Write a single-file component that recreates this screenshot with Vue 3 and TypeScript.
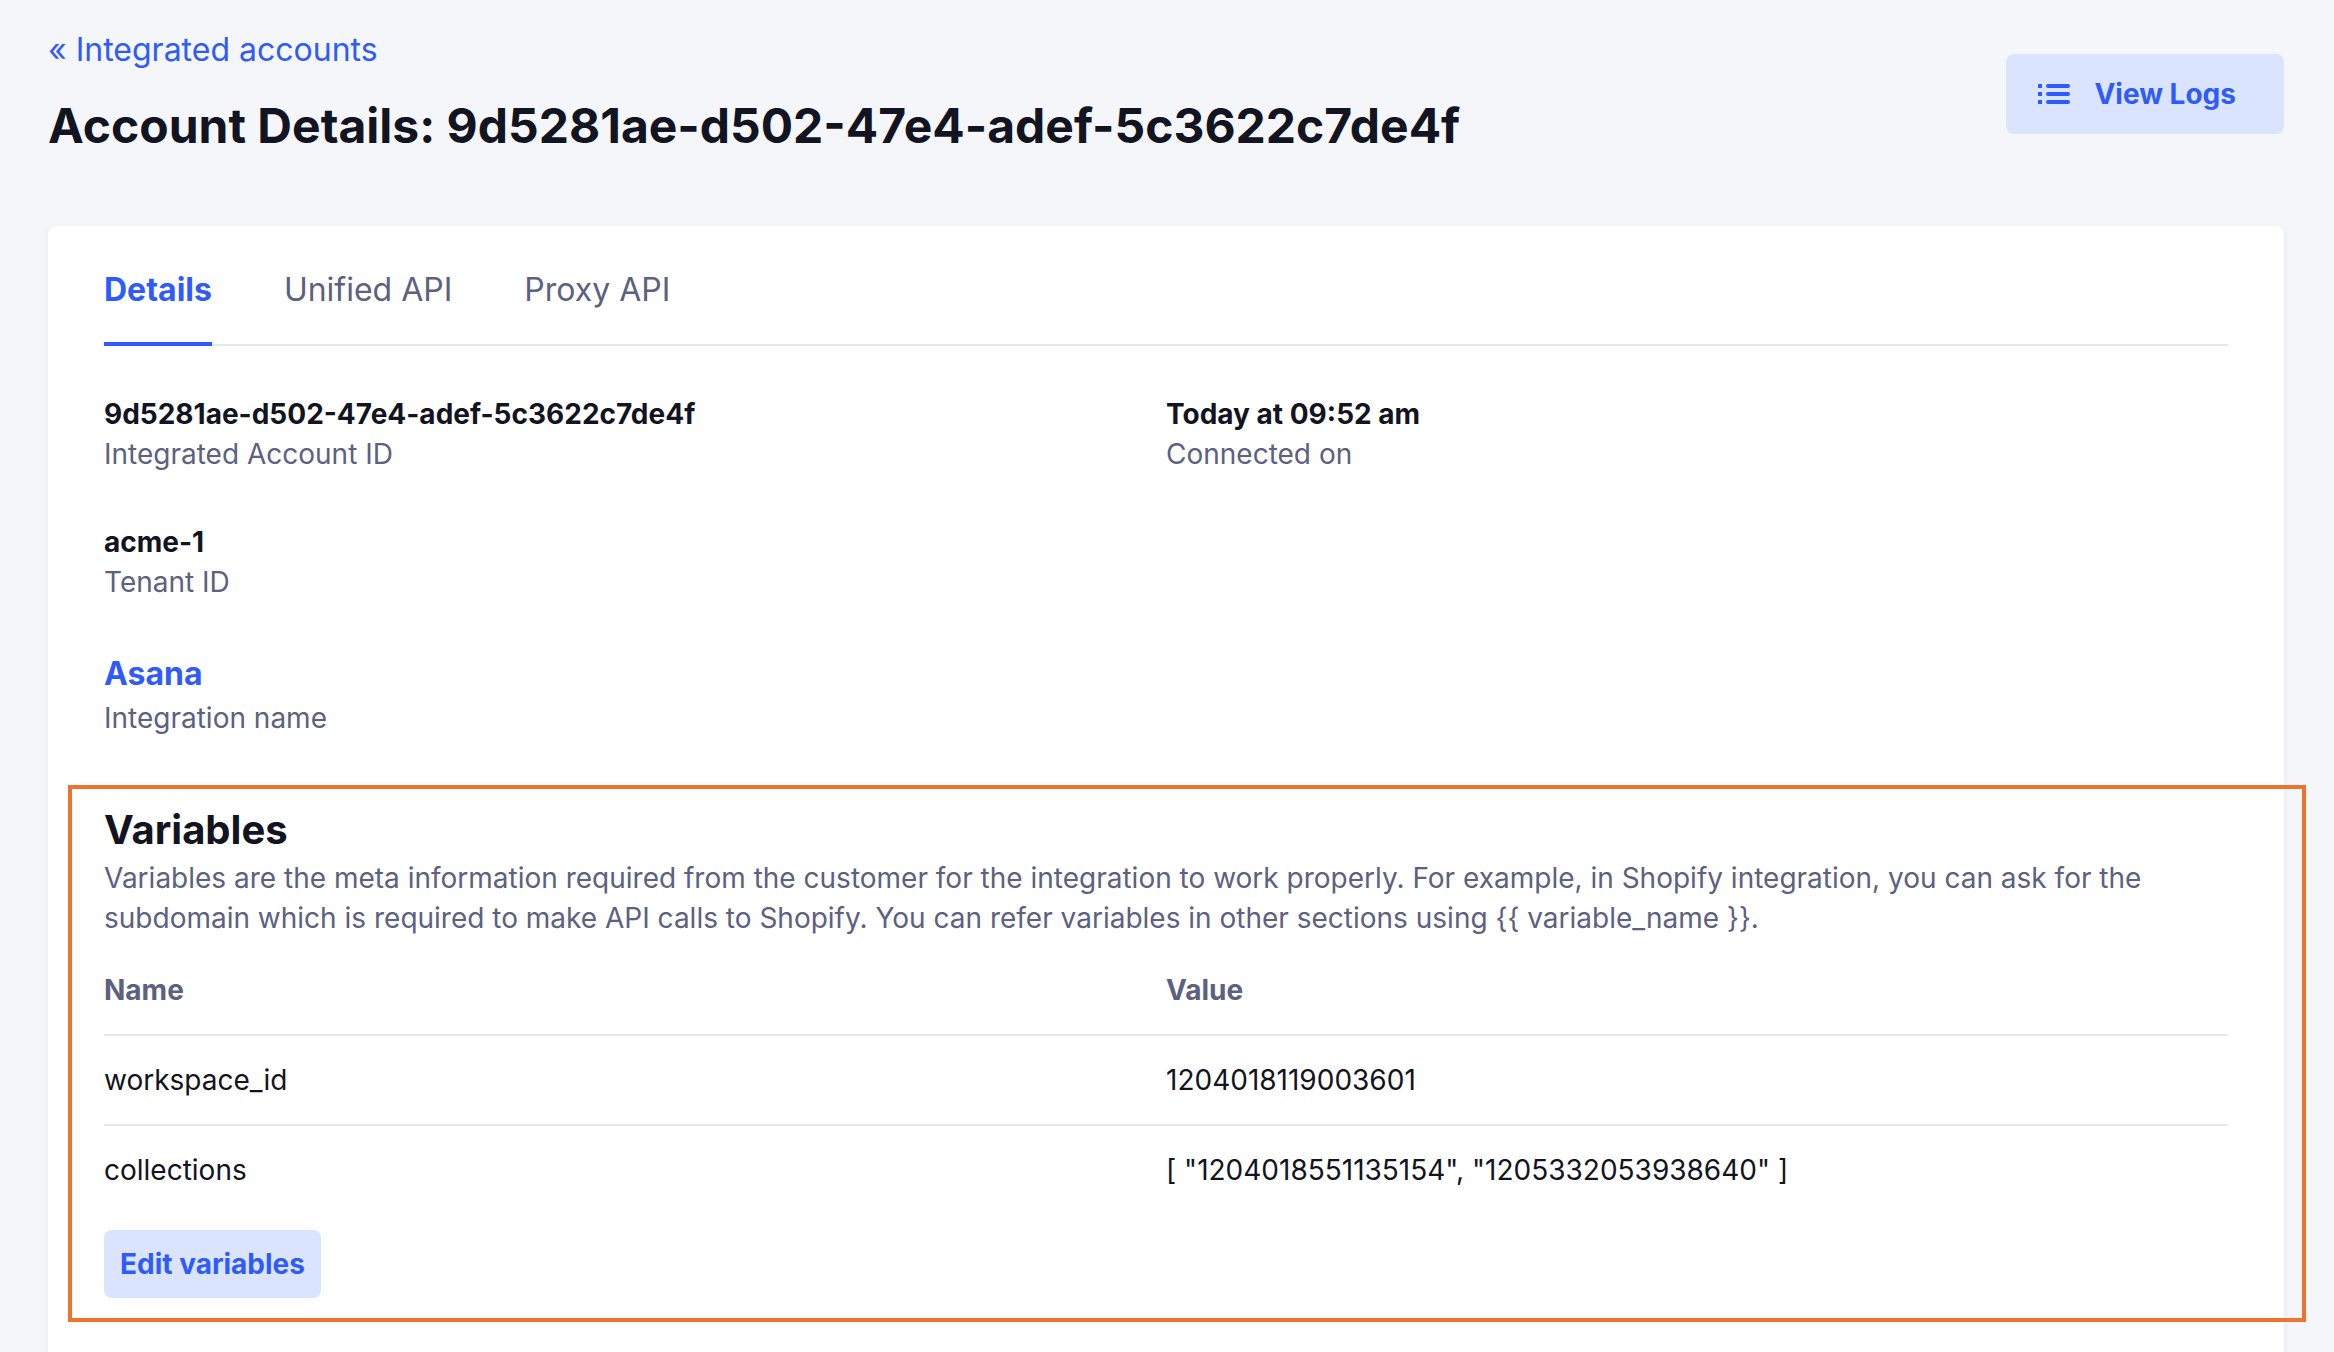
<script setup lang="ts">
interface Detail {
  value: string
  label: string
  href?: string
}

interface Variable {
  name: string
  value: string
}

const accountId = '9d5281ae-d502-47e4-adef-5c3622c7de4f'

const tabs: { label: string; active: boolean }[] = [
  { label: 'Details', active: true },
  { label: 'Unified API', active: false },
  { label: 'Proxy API', active: false },
]

const leftDetails: Detail[] = [
  { value: accountId, label: 'Integrated Account ID' },
  { value: 'acme-1', label: 'Tenant ID' },
  { value: 'Asana', label: 'Integration name', href: '#' },
]

const rightDetails: Detail[] = [{ value: 'Today at 09:52 am', label: 'Connected on' }]

const columns: Detail[][] = [leftDetails, rightDetails]

const variables: Variable[] = [
  { name: 'workspace_id', value: '1204018119003601' },
  { name: 'collections', value: '[ "1204018551135154", "1205332053938640" ]' },
]

const description =
  'Variables are the meta information required from the customer for the integration to work properly. ' +
  'For example, in Shopify integration, you can ask for the subdomain which is required to make API calls to Shopify. ' +
  'You can refer variables in other sections using {{ variable_name }}.'
</script>

<template>
  <div class="page">
    <header class="page-header">
      <div>
        <a class="back-link" href="#">« Integrated accounts</a>
        <h1 class="title">Account Details: {{ accountId }}</h1>
      </div>
      <button class="button view-logs" type="button">
        <svg class="list-icon" viewBox="0 0 32 20" aria-hidden="true">
          <path d="M0 0h4v4H0zM0 8h4v4H0zM0 16h4v4H0z" />
          <rect x="8" y="0" width="24" height="4" rx="2" />
          <rect x="8" y="8" width="24" height="4" rx="2" />
          <rect x="8" y="16" width="24" height="4" rx="2" />
        </svg>
        <span>View Logs</span>
      </button>
    </header>

    <main class="card">
      <nav class="tabs">
        <a
          v-for="tab in tabs"
          :key="tab.label"
          class="tab"
          :class="{ active: tab.active }"
          :aria-current="tab.active ? 'page' : undefined"
          href="#"
        >{{ tab.label }}</a>
      </nav>

      <div class="details">
        <dl v-for="(column, index) in columns" :key="index" class="detail-column">
          <div v-for="item in column" :key="item.label" class="detail">
            <dt class="detail-label">{{ item.label }}</dt>
            <dd class="detail-value">
              <a v-if="item.href" class="detail-link" :href="item.href">{{ item.value }}</a>
              <template v-else>{{ item.value }}</template>
            </dd>
          </div>
        </dl>
      </div>

      <section class="variables">
        <h2 class="section-title">Variables</h2>
        <p class="description">{{ description }}</p>
        <table class="table">
          <thead>
            <tr>
              <th scope="col">Name</th>
              <th scope="col">Value</th>
            </tr>
          </thead>
          <tbody>
            <tr v-for="variable in variables" :key="variable.name">
              <td>{{ variable.name }}</td>
              <td>{{ variable.value }}</td>
            </tr>
          </tbody>
        </table>
        <button class="button edit" type="button">Edit variables</button>
      </section>
    </main>
  </div>
</template>

<style>
body {
  background: #f5f6fa;
}
</style>

<style scoped>
.page {
  display: flex;
  flex-direction: column;
  box-sizing: border-box;
  min-height: 100vh;
  padding: 26px 50px 0 48px;
  overflow: hidden;
  background: #f5f6fa;
  color: #131421;
  font-family: Inter, "Liberation Sans", sans-serif;
  font-size: 28px;
  line-height: 40px;
}

.page-header {
  display: flex;
  justify-content: space-between;
  align-items: flex-start;
  padding-bottom: 68px;
}

.back-link {
  display: block;
  color: #2f5bfa;
  font-size: 32px;
  line-height: 48px;
  text-decoration: none;
}

.title {
  margin: 20px 0 0;
  font-size: 48px;
  line-height: 64px;
  font-weight: 700;
}

.button {
  border: 0;
  border-radius: 8px;
  background: #dbe4fe;
  color: #2f5bfa;
  font: inherit;
  font-weight: 700;
  white-space: nowrap;
  cursor: pointer;
}

.view-logs {
  display: flex;
  align-items: center;
  gap: 24px;
  margin-top: 28px;
  padding: 20px 48px 20px 32px;
}

.list-icon {
  width: 32px;
  height: 20px;
  fill: currentColor;
}

.card {
  flex: 1;
  padding: 40px 56px;
  border-radius: 8px 8px 0 0;
  background: #fff;
  box-shadow: 0 2px 6px rgba(19, 20, 33, 0.06);
}

.tabs {
  display: flex;
  gap: 72px;
  box-shadow: inset 0 -2px #e5e8f3;
}

.tab {
  padding-bottom: 28px;
  border-bottom: 4px solid transparent;
  color: #5c617f;
  font-size: 32px;
  line-height: 48px;
  text-decoration: none;
}

.tab.active {
  border-color: #2f5bfa;
  color: #2f5bfa;
  font-weight: 700;
}

.details {
  display: grid;
  grid-template-columns: 1fr 1fr;
  margin-top: 48px;
}

.detail-column {
  display: flex;
  flex-direction: column;
  gap: 48px;
  margin: 0;
}

.detail {
  display: flex;
  flex-direction: column-reverse;
}

.detail-label {
  color: #5c617f;
}

.detail-value {
  margin: 0;
  font-weight: 700;
}

.detail-link {
  display: block;
  color: #2f5bfa;
  font-size: 32px;
  line-height: 48px;
  text-decoration: none;
}

.variables {
  position: relative;
  margin-top: 64px;
}

/* Highlight frame that extends past the card edge */
.variables::after {
  content: "";
  position: absolute;
  inset: -17px -78px -24px -36px;
  border: 4px solid #ed732e;
  pointer-events: none;
}

.section-title {
  margin: 0;
  font-size: 40px;
  line-height: 56px;
  font-weight: 700;
}

.description {
  margin: 0 0 8px;
  color: #5c617f;
}

.table {
  width: 100%;
  margin-bottom: 16px;
  border-spacing: 0;
  table-layout: fixed;
}

.table th,
.table td {
  padding: 24px 0;
  border-bottom: 2px solid #e5e8f3;
  text-align: left;
}

.table th {
  color: #5c617f;
  font-weight: 700;
}

.table tbody tr:last-child td {
  border-bottom: 0;
}

.edit {
  display: block;
  padding: 14px 16px;
}
</style>
